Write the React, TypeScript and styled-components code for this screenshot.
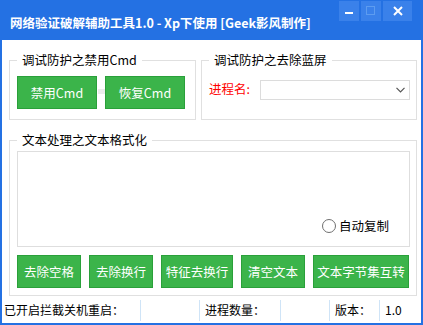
import * as React from "react";
import styled, { createGlobalStyle } from "styled-components";

const blue = "#2471e3";
const green = "#3bb44a";
const greenEdge = "#2aa03a";
const line = "#e0e0e0";

const GlobalStyle = createGlobalStyle`
  html, body {
    margin: 0;
    padding: 0;
    background: #ffffff;
  }
  * {
    box-sizing: border-box;
  }
  body {
    font-family: "Noto Sans CJK SC", "Noto Sans", sans-serif;
    font-size: 12px;
    color: #000;
  }
`;

const SWindow = styled.div`
  width: 423px;
  height: 325px;
  background: ${blue};
  padding: 0 2px 2px;
  display: flex;
  flex-direction: column;
`;

const STitleBar = styled.div`
  height: 40px;
  display: flex;
  align-items: flex-start;
  justify-content: space-between;
`;

const STitle = styled.div`
  color: #fff;
  font-weight: 700;
  font-size: 12.5px;
  line-height: 16px;
  margin: 15px 0 0 8px;
  white-space: pre;
`;

const SControls = styled.div`
  display: flex;
  gap: 2px;
  margin: 1px 9px 0 0;
`;

const SCtrlButton = styled.div<{ wide?: boolean }>`
  width: ${({ wide }) => (wide ? "29px" : "20px")};
  height: 20px;
  background: #3a81ea;
  display: flex;
  align-items: center;
  justify-content: center;
`;

const SClient = styled.div`
  flex: 1;
  background: #fff;
  display: flex;
  flex-direction: column;
  padding: 0 4px 0 7px;
`;

const STopRow = styled.div`
  display: flex;
  gap: 5px;
  margin-top: 11px;
`;

const SGroup = styled.fieldset<{ w: number; pt: number; pb: number }>`
  width: ${({ w }) => w}px;
  margin: 0;
  border: 1px solid ${line};
  padding: ${({ pt }) => pt}px 6px ${({ pb }) => pb}px 7px;
  min-width: 0;
`;

const SLegend = styled.legend`
  padding: 0 5px;
  font-size: 12.5px;
  line-height: 18px;
  color: #000;
`;

const SRow = styled.div`
  display: flex;
  align-items: center;
  gap: 8px;
`;

const SGreenButton = styled.div<{ w: number }>`
  width: ${({ w }) => w}px;
  height: 33px;
  background: ${green};
  border: 1px solid ${greenEdge};
  color: #fff;
  font-size: 12.5px;
  display: flex;
  align-items: center;
  justify-content: center;
  white-space: nowrap;
`;

const SHiddenEdit = styled.div`
  width: 7px;
  height: 5px;
  background: #ececec;
  margin: 0 -7px 2px -8px;
  position: relative;
  left: 1px;
  align-self: center;
`;

const SFieldLabel = styled.span`
  color: #ff0000;
  font-size: 12.5px;
  line-height: 16px;
  margin: 0 2px 3px 0;
`;

const SCombo = styled.div`
  flex: 1;
  height: 20px;
  border: 1px solid #dcdcdc;
  display: flex;
  align-items: center;
  justify-content: flex-end;
  padding-right: 4px;
`;

const SBottomGroup = styled(SGroup)`
  margin-top: 11px;
`;

const STextWrap = styled.div`
  position: relative;
  height: 96px;
  border: 1px solid #dedede;
  margin-bottom: 8px;
`;

const SRadioLabel = styled.div`
  position: absolute;
  left: 304px;
  top: 64px;
  display: flex;
  align-items: center;
  gap: 3px;
  font-size: 12.5px;
`;

const SRadio = styled.span`
  width: 14px;
  height: 14px;
  border-radius: 50%;
  border: 1px solid #6f6f6f;
  background: #fff;
`;

const SStatusBar = styled.div`
  margin: 4px -4px 0 -7px;
  height: 21px;
  display: grid;
  grid-template-columns: 139px 59px 81px 49px 50px 1fr;
  align-items: stretch;
`;

const SPanel = styled.div<{ pl: number; last?: boolean }>`
  border-right: ${({ last }) => (last ? "none" : "1px solid #cfe4f7")};
  padding-left: ${({ pl }) => pl}px;
  font-size: 12px;
  line-height: 20px;
  white-space: nowrap;
`;

const ChevronIcon = () => (
  <svg width="9" height="6" viewBox="0 0 9 6">
    <path d="M0.5 0.8 L4.5 4.8 L8.5 0.8" fill="none" stroke="#555" strokeWidth="1.2" />
  </svg>
);

const App = () => (
  <>
    <GlobalStyle />
    <SWindow>
      <STitleBar>
        <STitle>{`网络验证破解辅助工具1.0 - Xp下使用 [Geek影风制作]`}</STitle>
        <SControls>
          <SCtrlButton>
            <svg width="9" height="9" viewBox="0 0 9 9">
              <rect x="0" y="5" width="8" height="2" fill="#fff" />
            </svg>
          </SCtrlButton>
          <SCtrlButton>
            <svg width="10" height="10" viewBox="0 0 10 10">
              <rect x="0.5" y="0.5" width="8" height="8" fill="none" stroke="#5d9cf0" />
            </svg>
          </SCtrlButton>
          <SCtrlButton wide>
            <svg width="10" height="10" viewBox="0 0 10 10">
              <path d="M1 1 L9 9 M9 1 L1 9" stroke="#fff" strokeWidth="2" />
            </svg>
          </SCtrlButton>
        </SControls>
      </STitleBar>
      <SClient>
        <STopRow>
          <SGroup w={187} pt={7} pb={10}>
            <SLegend>{`调试防护之禁用Cmd`}</SLegend>
            <SRow>
              <SGreenButton w={80}>{`禁用Cmd`}</SGreenButton>
              <SHiddenEdit />
              <SGreenButton w={80}>{`恢复Cmd`}</SGreenButton>
            </SRow>
          </SGroup>
          <SGroup w={216} pt={11} pb={19}>
            <SLegend>{`调试防护之去除蓝屏`}</SLegend>
            <SRow>
              <SFieldLabel>{`进程名:`}</SFieldLabel>
              <SCombo>
                <ChevronIcon />
              </SCombo>
            </SRow>
          </SGroup>
        </STopRow>
        <SBottomGroup w={408} pt={2} pb={7}>
          <SLegend>{`文本处理之文本格式化`}</SLegend>
          <STextWrap>
            <SRadioLabel>
              <SRadio />
              <span>{`自动复制`}</span>
            </SRadioLabel>
          </STextWrap>
          <SRow>
            <SGreenButton w={64}>{`去除空格`}</SGreenButton>
            <SGreenButton w={64}>{`去除换行`}</SGreenButton>
            <SGreenButton w={72}>{`特征去换行`}</SGreenButton>
            <SGreenButton w={64}>{`清空文本`}</SGreenButton>
            <SGreenButton w={96}>{`文本字节集互转`}</SGreenButton>
          </SRow>
        </SBottomGroup>
        <SStatusBar>
          <SPanel pl={2}>{`已开启拦截关机重启：`}</SPanel>
          <SPanel pl={0} />
          <SPanel pl={5}>{`进程数量：`}</SPanel>
          <SPanel pl={0} />
          <SPanel pl={5}>{`版本：`}</SPanel>
          <SPanel pl={5} last>{`1.0`}</SPanel>
        </SStatusBar>
      </SClient>
    </SWindow>
  </>
);

export default App;
